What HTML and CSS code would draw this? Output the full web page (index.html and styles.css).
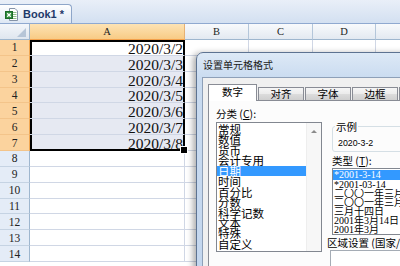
FILE: index.html
```html
<!DOCTYPE html>
<html lang="zh-CN">
<head>
<meta charset="utf-8">
<title>Book1</title>
<link rel="stylesheet" href="styles.css">
</head>
<body>
<div class="app">
  <div class="tabbar">
    <div class="doctab">
      <svg class="xlicon" width="13" height="13" viewBox="0 0 13 13">
        <path d="M4.5 0.5h5.5l2.5 2.5v9.5h-8z" fill="#fff" stroke="#8593a8"/>
        <path d="M8 4.5h3.5M8 6.5h3.5M8 8.5h3.5M8 10.5h3.5" stroke="#8fc08a"/>
        <rect x="0.5" y="3.5" width="7" height="7" fill="#2e8b3a" stroke="#1d6b2a"/>
        <path d="M2.2 5.2l3.6 3.6M5.8 5.2l-3.6 3.6" stroke="#fff" stroke-width="1.3"/>
      </svg>
      <span class="docname">Book1 *</span>
    </div>
  </div>

  <div class="sheet">
    <div class="corner"><span class="tri"></span></div>
    <div class="colh csel">A</div>
    <div class="colh">B</div>
    <div class="colh">C</div>
    <div class="colh">D</div>
    <div class="colh">E</div>

    <div class="rowh rsel">1</div><div class="cell s act first">2020/3/2</div><div class="cell"></div><div class="cell"></div><div class="cell"></div><div class="cell"></div>
    <div class="rowh rsel">2</div><div class="cell s">2020/3/3</div><div class="cell"></div><div class="cell"></div><div class="cell"></div><div class="cell"></div>
    <div class="rowh rsel">3</div><div class="cell s">2020/3/4</div><div class="cell"></div><div class="cell"></div><div class="cell"></div><div class="cell"></div>
    <div class="rowh rsel">4</div><div class="cell s">2020/3/5</div><div class="cell"></div><div class="cell"></div><div class="cell"></div><div class="cell"></div>
    <div class="rowh rsel">5</div><div class="cell s">2020/3/6</div><div class="cell"></div><div class="cell"></div><div class="cell"></div><div class="cell"></div>
    <div class="rowh rsel">6</div><div class="cell s">2020/3/7</div><div class="cell"></div><div class="cell"></div><div class="cell"></div><div class="cell"></div>
    <div class="rowh rsel">7</div><div class="cell s last">2020/3/8</div><div class="cell"></div><div class="cell"></div><div class="cell"></div><div class="cell"></div>
    <div class="rowh">8</div><div class="cell"></div><div class="cell"></div><div class="cell"></div><div class="cell"></div><div class="cell"></div>
    <div class="rowh">9</div><div class="cell"></div><div class="cell"></div><div class="cell"></div><div class="cell"></div><div class="cell"></div>
    <div class="rowh">10</div><div class="cell"></div><div class="cell"></div><div class="cell"></div><div class="cell"></div><div class="cell"></div>
    <div class="rowh">11</div><div class="cell"></div><div class="cell"></div><div class="cell"></div><div class="cell"></div><div class="cell"></div>
    <div class="rowh">12</div><div class="cell"></div><div class="cell"></div><div class="cell"></div><div class="cell"></div><div class="cell"></div>
    <div class="rowh">13</div><div class="cell"></div><div class="cell"></div><div class="cell"></div><div class="cell"></div><div class="cell"></div>
    <div class="rowh">14</div><div class="cell"></div><div class="cell"></div><div class="cell"></div><div class="cell"></div><div class="cell"></div>
  </div>

  <div class="dialog">
    <div class="dtitle">设置单元格格式</div>
    <div class="client">
      <div class="tabs">
        <div class="tab on">数字</div>
        <div class="tab">对齐</div>
        <div class="tab">字体</div>
        <div class="tab">边框</div>
        <div class="tab">填充</div>
        <div class="tab">保护</div>
      </div>
      <div class="panel">
        <div class="leftcol">
          <div class="lbl">分类 (<u>C</u>):</div>
          <div class="listbox">
            <ul class="items">
              <li>常规</li>
              <li>数值</li>
              <li>货币</li>
              <li>会计专用</li>
              <li class="hl">日期</li>
              <li>时间</li>
              <li>百分比</li>
              <li>分数</li>
              <li>科学记数</li>
              <li>文本</li>
              <li>特殊</li>
              <li>自定义</li>
            </ul>
            <div class="vscroll"><span class="up"></span></div>
          </div>
        </div>
        <div class="rightcol">
          <fieldset class="sample">
            <legend>示例</legend>
            <div class="sval">2020-3-2</div>
          </fieldset>
          <div class="lbl tlbl">类型 (<u>T</u>):</div>
          <ul class="typelist">
            <li class="hl">*2001-3-14</li>
            <li>*2001-03-14</li>
            <li>二〇〇一年三月十四日</li>
            <li>二〇〇一年三月</li>
            <li>三月十四日</li>
            <li>2001年3月14日</li>
            <li>2001年3月</li>
          </ul>
          <div class="lbl region">区域设置 (国家/地区)(<u>L</u>):</div>
          <div class="combo"></div>
        </div>
      </div>
    </div>
  </div>
</div>
</body>
</html>
```

FILE: styles.css
```css
* { box-sizing: border-box; }
html, body { margin: 0; padding: 0; }
body {
  width: 400px;
  height: 266px;
  overflow: hidden;
  background: #fff;
  font-family: "Liberation Sans", "Noto Sans CJK SC", sans-serif;
}
.app {
  position: relative;
  width: 400px;
  height: 266px;
  overflow: hidden;
}

/* ---------- workbook tab bar ---------- */
.tabbar {
  height: 24px;
  background: linear-gradient(#e9eff8, #d3e0f1);
  border-bottom: 1px solid #8fa9d0;
  padding-top: 4px;
  display: flex;
  align-items: flex-end;
}
.doctab {
  width: 72px;
  height: 19px;
  background: linear-gradient(#ffffff, #eef3fa 50%, #dde7f4);
  border: 1px solid #8ea6c9;
  border-left: none;
  border-bottom: none;
  border-radius: 0 4px 0 0;
  display: flex;
  align-items: center;
  gap: 5px;
  padding-left: 5px;
}
.xlicon { flex: none; }
.docname {
  font-family: "Liberation Sans", sans-serif;
  font-weight: bold;
  font-size: 11px;
  color: #1f3a6a;
  white-space: pre;
}

/* ---------- sheet grid ---------- */
.sheet {
  display: grid;
  grid-template-columns: 30px 155px 64px 64px 63px 60px;
  grid-template-rows: 16px repeat(14, 15.86px);
}
.corner {
  position: relative;
  background: linear-gradient(#f3f6fa, #dfe6ef);
  border-right: 1px solid #9eb6ce;
  border-bottom: 1px solid #9eb6ce;
}
.tri {
  position: absolute;
  right: 3px;
  bottom: 2px;
  width: 0;
  height: 0;
  border-left: 9px solid transparent;
  border-bottom: 9px solid #b6c5d7;
}
.colh {
  background: linear-gradient(#f8fafc, #e3e9f1);
  border-right: 1px solid #b4c6da;
  border-bottom: 1px solid #9eb6ce;
  font-family: "Liberation Serif", serif;
  font-size: 10.5px;
  color: #222;
  display: flex;
  align-items: center;
  justify-content: center;
}
.colh.csel {
  background: linear-gradient(#fde3b4, #f8cb85);
  border-bottom-color: #f2a04a;
  border-right-color: #e6b174;
}
.rowh {
  background: #e4ecf7;
  border-right: 1px solid #9eb6ce;
  border-bottom: 1px solid #c5d3e3;
  font-family: "Liberation Serif", serif;
  font-size: 11.5px;
  color: #222;
  display: flex;
  align-items: center;
  justify-content: center;
}
.rowh.rsel {
  background: #fbd39e;
  border-right-color: #f1a650;
  border-bottom-color: #f3c48a;
}
.cell {
  border-right: 1px solid #d0d7e5;
  border-bottom: 1px solid #d0d7e5;
}
.cell.s {
  background: #e6e9f2;
  border-right-color: #000;
  box-shadow: inset 2px 0 0 #000, inset -1px 0 0 #000;
  font-family: "Liberation Serif", serif;
  font-size: 15.5px;
  line-height: 13px;
  color: #111;
  display: flex;
  align-items: flex-end;
  justify-content: flex-end;
  padding-right: 1px;
}
.cell.s.act { background: #fff; }
.cell.s.first {
  box-shadow: inset 2px 0 0 #000, inset -1px 0 0 #000, inset 0 2px 0 #000;
}
.cell.s.last {
  position: relative;
  border-bottom-color: #000;
  box-shadow: inset 2px 0 0 #000, inset -1px 0 0 #000, inset 0 -1px 0 #000;
}
.cell.s.last::after {
  content: "";
  position: absolute;
  right: -4px;
  bottom: -4px;
  width: 6px;
  height: 6px;
  background: #000;
  border: 1px solid #fff;
  z-index: 2;
}

/* ---------- format cells dialog ---------- */
.dialog {
  position: absolute;
  left: 196px;
  top: 52px;
  width: 262px;
  height: 240px;
  background: linear-gradient(#dde9f6, #c9dbf0 26px, #c3d6ee);
  border: 1px solid #5d7391;
  border-radius: 7px 7px 0 0;
  box-shadow: -3px 1px 6px rgba(0, 0, 0, 0.32);
  padding-left: 5px;
  font-family: "Noto Sans CJK SC", "Liberation Sans", sans-serif;
  color: #000;
}
.dtitle {
  height: 24px;
  line-height: 24px;
  padding-left: 1px;
  font-size: 10px;
  color: #1b1b1b;
  white-space: nowrap;
}
.client {
  height: 220px;
  background: #f0f0f0;
  border: 1px solid #8ea0b8;
  border-right: none;
  padding: 6px 0 0 5px;
}
.tabs {
  height: 16px;
  display: flex;
  align-items: flex-end;
}
.tab {
  flex: none;
  width: 46px;
  height: 13px;
  margin-left: 1px;
  background: linear-gradient(#f6f6f6, #ebebeb 50%, #dcdcdc 51%, #cfcfcf);
  border: 1px solid #898c95;
  border-bottom: none;
  font-size: 10.5px;
  line-height: 1;
  display: flex;
  align-items: center;
  justify-content: center;
  white-space: nowrap;
}
.tab.on {
  position: relative;
  z-index: 1;
  width: 49px;
  height: 17px;
  margin-left: 0;
  margin-bottom: -1px;
  background: #fff;
  padding-bottom: 1px;
}
.panel {
  height: 200px;
  background: #fcfcfc;
  border: 1px solid #898c95;
  border-right: none;
  padding-left: 7px;
  display: flex;
  gap: 10px;
}
.lbl {
  font-size: 10.5px;
  line-height: 13px;
  white-space: nowrap;
}
.leftcol {
  flex: none;
  width: 106px;
  display: flex;
  flex-direction: column;
}
.leftcol .lbl { margin-top: 6px; }
.listbox {
  margin-top: 2px;
  height: 130px;
  background: #fff;
  border: 1px solid #828790;
  display: flex;
}
.items {
  flex: 1;
  margin: 0;
  padding: 1px 0 0 0;
  list-style: none;
  font-size: 11.5px;
  line-height: 10.45px;
  overflow: hidden;
}
.items li {
  height: 10.45px;
  padding-left: 1px;
  white-space: nowrap;
}
.items li.hl { background: #3399ff; color: #fff; }
.vscroll {
  flex: none;
  width: 15px;
  background: #f7f7f7;
  border-left: 1px solid #eeeeee;
  display: flex;
  justify-content: center;
  padding-top: 7px;
}
.up {
  width: 0;
  height: 0;
  border-left: 3px solid transparent;
  border-right: 3px solid transparent;
  border-bottom: 3px solid #8a8a8a;
}
.rightcol {
  flex: 1;
  min-width: 0;
  display: flex;
  flex-direction: column;
  align-items: stretch;
}
.sample {
  margin: 19px 0 0 0;
  padding: 0 0 2px 2px;
  border: 1px solid #d5dfe5;
  border-radius: 3px;
  min-width: 0;
}
.sample legend {
  padding: 0 1px;
  font-size: 10.5px;
  line-height: 13px;
}
.sval {
  margin: 4px 0 0 3px;
  font-family: "Liberation Sans", sans-serif;
  font-size: 8.8px;
  line-height: 12px;
}
.tlbl { margin-top: 2px; }
.typelist {
  margin: 1px 0 0 0;
  height: 67px;
  padding: 1px 0 0 0;
  list-style: none;
  background: #fff;
  border: 1px solid #828790;
  font-family: "Liberation Serif", "Noto Sans CJK SC", serif;
  font-size: 10px;
  line-height: 9px;
  overflow: hidden;
}
.typelist li {
  height: 9px;
  padding-left: 1px;
  white-space: nowrap;
  overflow: hidden;
}
.typelist li.hl {
  height: 10px;
  line-height: 10px;
  background: #3399ff;
  color: #fff;
}
.region {
  margin: 1px 0 0 -5px;
}
.combo {
  margin: 1px 0 0 -2px;
  height: 20px;
  background: #fff;
  border: 1px solid #a5acb5;
}
```
